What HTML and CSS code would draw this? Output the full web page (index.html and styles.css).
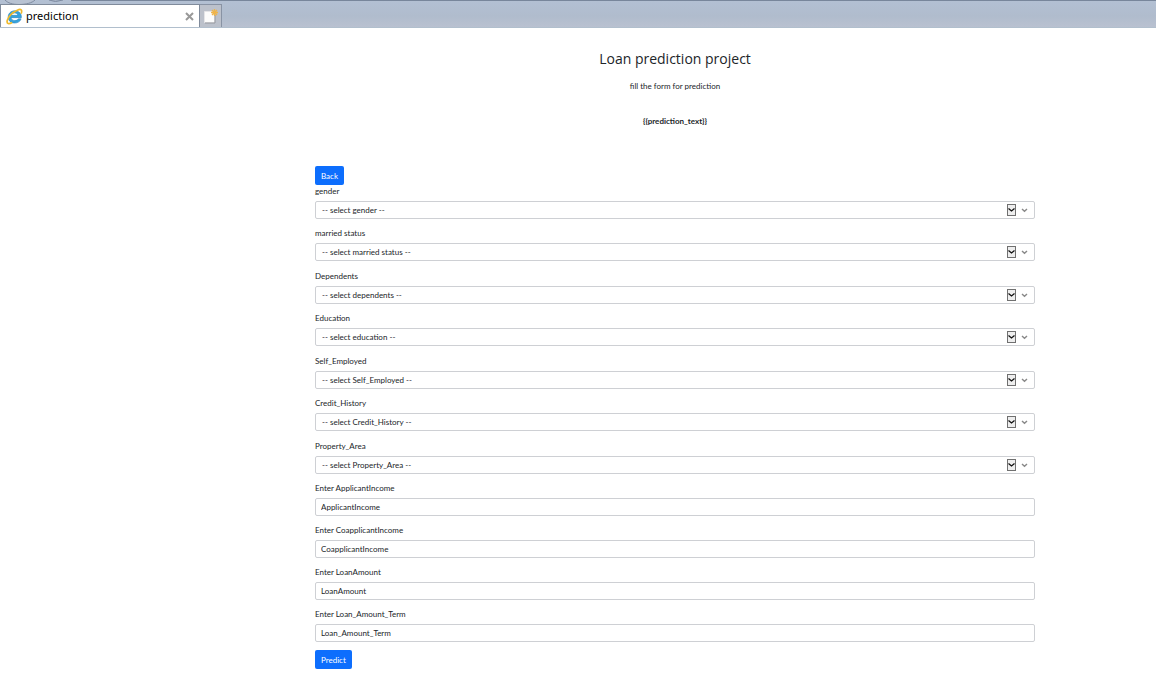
FILE: index.html
```html
<!DOCTYPE html>
<html lang="en">
<head>
<meta charset="utf-8">
<title>prediction</title>
<link rel="stylesheet" href="styles.css">
</head>
<body>
<svg class="defs" aria-hidden="true">
  <symbol id="arrows" viewBox="0 0 22 12">
    <rect x=".5" y=".5" width="8" height="11" fill="#eee" stroke="#707070"/>
    <path d="M1.500 4.500 4.500 7 7.500 4.500" fill="none" stroke="#111" stroke-width="1.300"/>
    <path d="M15 5 17.500 7.300 20 5" fill="none" stroke="#888" stroke-width="1.400"/>
  </symbol>
</svg>
<header class="browser-bar">
  <svg class="toolbar-edge" viewBox="0 0 80 5" aria-hidden="true">
    <path d="M5 0C8 3 12 4.500 19 4.500S32 3 35 0" fill="#b8c2d2" stroke="#7e8ba0"/>
    <path d="M49 0Q55 3 63 0" fill="#a7b3c5" stroke="#7e8ba0"/>
  </svg>
  <div class="tab">
    <svg class="logo" viewBox="0 0 18 18" aria-hidden="true">
      <path d="M13 11.500C11.800 14 6 14.200 5.300 10.200H16.300C17 .800 2.500 .500 2.300 9.500 2.300 18 14.500 17.500 16 11.500ZM5.500 7.800C6.200 4.300 12 4.300 12.700 7.800Z" fill="#35a3dc" stroke="#2381c0" stroke-width=".6" fill-rule="evenodd"/>
      <path d="M16 6C17.500 2 16 .500 12 2.300 7 4.500 2.500 9 1.300 13.300.500 17 3 17.300 6.500 15.300" fill="none" stroke="#efb92d" stroke-width="1.800"/>
    </svg>
    <span class="tab-title">prediction</span>
    <button class="close" aria-label="Close tab"><svg viewBox="0 0 9 9"><path d="m1 1 7 7M8 1 1 8" stroke="#999" stroke-width="2"/></svg></button>
  </div>
  <button class="new-tab" aria-label="New tab"><svg viewBox="0 0 16 16">
    <path d="M1.500 3.500h10v11h-10z" fill="#fcfcfc" stroke="#e5e5e8"/><path d="M2 15h10V7" fill="none" stroke="#96999f"/>
    <path d="M11.500 1v7M8 4.500h7M9 2l5 5M14 2 9 7" stroke="#efb44b" stroke-width="1.300"/>
  </svg></button>
</header>
<main class="page">
  <div class="content">
    <h1 class="title">Loan prediction project</h1>
    <p class="intro">fill the form for prediction</p>
    <p class="result">{{prediction_text}}</p>
    <button class="btn" type="button">Back</button>
    <form class="form">
      <div class="choices">
        <div class="field"><label for="gender">gender</label><div class="pick"><select class="control" id="gender"><option>-- select gender --</option></select><svg class="arrows"><use href="#arrows"/></svg></div></div>
        <div class="field"><label for="married">married status</label><div class="pick"><select class="control" id="married"><option>-- select married status --</option></select><svg class="arrows"><use href="#arrows"/></svg></div></div>
        <div class="field"><label for="dependents">Dependents</label><div class="pick"><select class="control" id="dependents"><option>-- select dependents --</option></select><svg class="arrows"><use href="#arrows"/></svg></div></div>
        <div class="field"><label for="education">Education</label><div class="pick"><select class="control" id="education"><option>-- select education --</option></select><svg class="arrows"><use href="#arrows"/></svg></div></div>
        <div class="field"><label for="employed">Self_Employed</label><div class="pick"><select class="control" id="employed"><option>-- select Self_Employed --</option></select><svg class="arrows"><use href="#arrows"/></svg></div></div>
        <div class="field"><label for="credit">Credit_History</label><div class="pick"><select class="control" id="credit"><option>-- select Credit_History --</option></select><svg class="arrows"><use href="#arrows"/></svg></div></div>
        <div class="field"><label for="area">Property_Area</label><div class="pick"><select class="control" id="area"><option>-- select Property_Area --</option></select><svg class="arrows"><use href="#arrows"/></svg></div></div>
      </div>
      <div class="field"><label for="income">Enter ApplicantIncome</label><input class="control" id="income" type="text" placeholder="ApplicantIncome"></div>
      <div class="field"><label for="coincome">Enter CoapplicantIncome</label><input class="control" id="coincome" type="text" placeholder="CoapplicantIncome"></div>
      <div class="field"><label for="amount">Enter LoanAmount</label><input class="control" id="amount" type="text" placeholder="LoanAmount"></div>
      <div class="field"><label for="term">Enter Loan_Amount_Term</label><input class="control" id="term" type="text" placeholder="Loan_Amount_Term"></div>
      <button class="btn" type="submit">Predict</button>
    </form>
  </div>
</main>
</body>
</html>
```
FILE: styles.css
```css
* { box-sizing: border-box; }
body { margin: 0; background: #fff; color: #212529; font: 8px/12px Lato, "Open Sans", sans-serif; }
button, input, select { font: inherit; color: inherit; }
.defs { position: absolute; width: 0; height: 0; }
.browser-bar { position: relative; display: flex; padding-top: 4px; height: 28px; background: linear-gradient(#b3c0d3, #b0bccd 60%, #b9c1d0); border-bottom: 1px solid #b1bfcd; }
.browser-bar::before { content: ""; position: absolute; top: 0; left: 71px; right: 0; height: 1px; background: #78869b; }
.toolbar-edge { position: absolute; top: 0; left: 0; width: 80px; height: 5px; }
.tab { position: relative; display: flex; align-items: center; gap: 3px; width: 200px; padding: 0 5px; background: #fff; border: 1px solid #808b9b; border-bottom: 0; }
.logo { width: 17px; height: 17px; }
.tab-title { flex: 1; font: 11px/16px "Noto Sans", sans-serif; color: #000; }
.close, .new-tab { display: flex; align-items: center; justify-content: center; padding: 0; border: 0; background: none; }
.close svg { width: 9px; height: 9px; }
.new-tab { position: relative; width: 22px; background: #bcc1cb; border: 1px solid #8993a4; border-left: 0; border-bottom: 0; }
.new-tab svg { width: 16px; height: 16px; }
.page { display: grid; grid-template-columns: 315fr 720fr 121fr; }
.content { grid-column: 2; padding: 21px 0 16px; }
.title { margin: 0; text-align: center; font-family: "Open Sans", sans-serif; font-size: 14px; line-height: 20px; font-weight: 400; }
.intro, .result { margin: 0; text-align: center; }
.intro { padding-top: 11px; }
.result { padding: 23px 0 39px; font-weight: 700; }
.btn { display: block; height: 19px; padding: 0 6px; border: 0; border-radius: 2px; background: #0d6efd; color: #fff; }
.field { display: grid; gap: 4px; margin-bottom: 8px; }
.choices .field:nth-child(even) { margin-bottom: 9px; }
.pick { position: relative; display: grid; }
.control { width: 100%; height: 18px; padding: 0 5px; border: 1px solid #ced0d4; border-radius: 2px; background: #fff; appearance: none; }
select.control { padding: 0 6px; }
.control::placeholder { color: #212529; opacity: 1; }
.arrows { position: absolute; top: 3px; right: 6px; width: 22px; height: 12px; pointer-events: none; }
```
